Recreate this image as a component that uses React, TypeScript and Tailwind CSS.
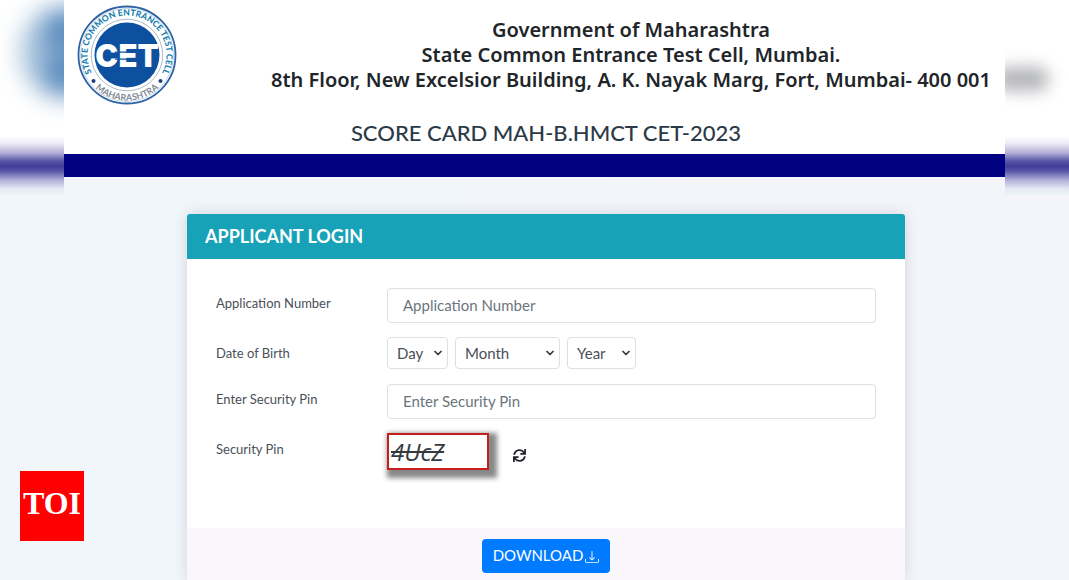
import type { ReactNode } from "react";
import { ChevronDown } from "lucide-react";
import { BsDownload } from "react-icons/bs";
import { FaSync } from "react-icons/fa";

/** Round seal of the test cell. Ring lettering follows the two arcs. */
function CetSeal({ className }: { className?: string }) {
  return (
    <svg viewBox="0 0 100 102" className={className} role="img" aria-label="CET Cell">
      <defs>
        <path id="seal-top" d="M 18.9 75.3 A 39.5 39.5 0 1 1 81.1 75.3" />
        <path id="seal-bottom" d="M 11 75 A 46 46 0 0 0 89 75" />
      </defs>
      <circle cx="50" cy="51" r="48.5" fill="#fff" stroke="#2f62a5" strokeWidth="1.8" />
      <circle cx="50" cy="51" r="46.6" fill="none" stroke="#9fc0dd" strokeWidth="0.6" />
      <circle cx="50" cy="51" r="35.8" fill="none" stroke="#a3b3c4" strokeWidth="0.9" />
      <circle cx="50" cy="51" r="32.5" fill="#0d509f" />
      <text
        fill="#1c7fb0"
        fontFamily="Lato, sans-serif"
        fontWeight="900"
        fontSize="8.6"
        textAnchor="middle"
      >
        <textPath href="#seal-top" startOffset="50%">
          STATE COMMON ENTRANCE TEST CELL
        </textPath>
      </text>
      <text
        fill="#7f8a97"
        fontFamily="Lato, sans-serif"
        fontWeight="700"
        fontSize="9"
        textAnchor="middle"
      >
        <textPath href="#seal-bottom" startOffset="50%">
          MAHARASHTRA
        </textPath>
      </text>
      <circle cx="16.5" cy="77" r="2" fill="#1d3f7c" />
      <circle cx="83.5" cy="77" r="2" fill="#1d3f7c" />
      <text
        x="50"
        y="63"
        fill="#fff"
        fontFamily="Inter, sans-serif"
        fontWeight="900"
        fontSize="31"
        textAnchor="middle"
      >
        CET
      </text>
      <path d="M38 48.2h21M38 55.2h21" stroke="#0d509f" strokeWidth="1.2" />
    </svg>
  );
}

/** Blurred strip that fills the space beside the page. */
function Gutter({ children }: { children?: ReactNode }) {
  return (
    <div className="relative w-16 shrink-0 overflow-hidden">
      <div className="h-[168px] bg-white" />
      <div className="absolute inset-x-0 top-[136px] h-[60px] bg-[linear-gradient(#ffffff_0%,#eeecf6_12%,#b3b0d8_28%,#5653a5_42%,#413e9b_50%,#5653a5_58%,#b3b3d9_74%,#e4e8f4_88%,#f0f6fa_100%)]" />
      {children}
    </div>
  );
}

function DateSelect({
  label,
  options,
  className,
}: {
  label: string;
  options: string[];
  className: string;
}) {
  return (
    <div className={`relative ${className}`}>
      <select
        aria-label={label}
        className="h-8 w-full appearance-none rounded border border-[#dcdfe3] bg-white pl-[9px] text-[15px] text-[#495057] outline-none"
      >
        <option>{label}</option>
        {options.map((o) => (
          <option key={o}>{o}</option>
        ))}
      </select>
      <ChevronDown
        className="pointer-events-none absolute right-1 top-[10px] size-3 text-[#343a40]"
        strokeWidth={3.5}
      />
    </div>
  );
}

const DAYS = Array.from({ length: 31 }, (_, i) => String(i + 1));
const YEARS = Array.from({ length: 40 }, (_, i) => String(2010 - i));
const MONTHS = [
  "January",
  "February",
  "March",
  "April",
  "May",
  "June",
  "July",
  "August",
  "September",
  "October",
  "November",
  "December",
];

const INPUT =
  "h-[35px] w-full rounded border border-[#dcdfe3] bg-white px-[15px] pb-[2px] text-[15px] text-[#495057] outline-none placeholder:text-[#6c757d]";
const LABEL = "w-[171px] shrink-0 text-[13px] leading-5 text-[#495057]";

export default function App() {
  return (
    <div className="flex min-h-screen bg-[linear-gradient(90deg,#f0f6fa_30%,#f4f5fa_75%)] font-[Lato,sans-serif]">
      <Gutter>
        <div className="absolute left-[20px] top-[6px] size-[92px] rounded-full bg-[radial-gradient(circle_at_46px_24px,#2f6cae_0%,transparent_40%),radial-gradient(circle_at_46px_70px,#2f6cae_0%,transparent_40%)] bg-[#a9c4dc] blur-[12px]" />
      </Gutter>

      <div className="flex min-w-0 flex-1 flex-col">
        <header className="bg-white">
          <div className="flex h-[112px] items-start justify-between pl-[13px] pr-[14px] pt-1">
            <CetSeal className="h-[102px] w-[100px] shrink-0" />
            <h1 className="pt-[13px] text-center font-['Noto_Sans',sans-serif] text-[20px] font-semibold leading-[25px] text-[#212529]">
              Government of Maharashtra
              <br />
              State Common Entrance Test Cell, Mumbai.
              <br />
              8th Floor, New Excelsior Building, A. K. Nayak Marg, Fort, Mumbai- 400 001
            </h1>
          </div>
          <h2 className="h-[42px] pl-[23px] pt-[6px] text-center text-[22px] font-medium leading-[30px] text-[#2c3a47]">
            SCORE CARD MAH-B.HMCT CET-2023
          </h2>
          <div className="h-[23px] bg-[#000080]" />
        </header>

        <main className="flex flex-1 flex-col pl-[123px] pr-[100px] pt-[37px]">
          <form
            className="flex flex-1 flex-col rounded-t bg-white shadow-[0_0_14px_rgba(60,60,90,0.18)]"
            onSubmit={(e) => e.preventDefault()}
          >
            <h3 className="rounded-t-[3px] bg-[#17a2b8] px-[18px] py-[10px] text-[18px] font-bold leading-[25px] text-white">
              APPLICANT LOGIN
            </h3>

            <div className="flex h-[269px] flex-col px-[29px] pt-[29px]">
              <div className="flex">
                <label htmlFor="app-no" className={`${LABEL} pt-[5px]`}>
                  Application Number
                </label>
                <input id="app-no" placeholder="Application Number" className={INPUT} />
              </div>

              <div className="mt-[14px] flex" role="group" aria-labelledby="dob">
                <span id="dob" className={`${LABEL} pt-[6px]`}>
                  Date of Birth
                </span>
                <div className="flex gap-[7px]">
                  <DateSelect label="Day" options={DAYS} className="w-[61px]" />
                  <DateSelect label="Month" options={MONTHS} className="w-[105px]" />
                  <DateSelect label="Year" options={YEARS} className="w-[69px]" />
                </div>
              </div>

              <div className="mt-[15px] flex">
                <label htmlFor="pin" className={`${LABEL} pt-[5px]`}>
                  Enter Security Pin
                </label>
                <input id="pin" placeholder="Enter Security Pin" className={INPUT} />
              </div>

              <div className="mt-[14px] flex">
                <span className={`${LABEL} pt-[6px]`}>Security Pin</span>
                <div className="h-[37px] w-[102px] border-2 border-[#c41e1e] bg-white pl-[2px] font-['Open_Sans',sans-serif] text-[24px] italic leading-[33px] text-[#343a40] line-through shadow-[4px_4px_5px_4px_#888]">
                  4UcZ
                </div>
                <button
                  type="button"
                  aria-label="Refresh security pin"
                  className="ml-6 mt-[15px] size-[14px] text-[#212529]"
                >
                  <FaSync className="size-[13px]" />
                </button>
              </div>
            </div>

            <div className="flex flex-1 items-start justify-center bg-[#f9f6fc] pb-[7px] pt-[11px]">
              <button
                type="submit"
                className="flex h-[34px] items-center gap-[2px] rounded bg-[#007bff] px-[11px] pb-[2px] text-[15px] text-white"
              >
                DOWNLOAD
                <BsDownload className="mt-1 size-[14px]" />
              </button>
            </div>
          </form>
        </main>
      </div>

      <Gutter>
        <div className="absolute left-[-10px] top-[67px] h-6 w-[54px] rounded-full bg-[#b4b5b9] blur-[8px]" />
      </Gutter>

      <div className="fixed bottom-[39px] left-5 grid h-[70px] w-16 place-items-center bg-[#ff0000] pb-[7px] font-['Liberation_Serif',serif] text-[32px] font-bold leading-none text-white">
        TOI
      </div>
    </div>
  );
}
